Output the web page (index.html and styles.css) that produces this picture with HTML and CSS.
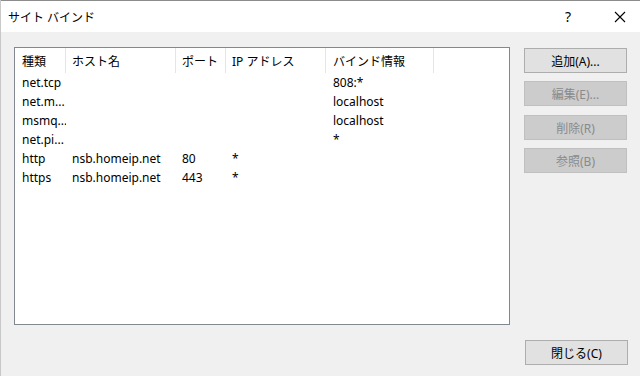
FILE: index.html
```html
<!DOCTYPE html>
<html lang="ja">
<head>
    <meta charset="UTF-8">
    <title>サイト バインド</title>
    <link rel="stylesheet" href="styles.css">
</head>
<body>
    <div class="window">
        <!-- Title bar -->
        <div class="titlebar">
            <span class="title">サイト バインド</span>
            <span class="help">?</span>
            <span class="close">
                <svg width="12" height="12" viewBox="0 0 12 12">
                    <path d="M1 1 L11 11 M11 1 L1 11" stroke="#000" stroke-width="1.1" fill="none"/>
                </svg>
            </span>
        </div>

        <!-- Main area -->
        <div class="content">
            <div class="listview">
                <table>
                    <thead>
                        <tr>
                            <th class="c1">種類</th>
                            <th class="c2">ホスト名</th>
                            <th class="c3">ポート</th>
                            <th class="c4">IP アドレス</th>
                            <th class="c5">バインド情報</th>
                        </tr>
                    </thead>
                    <tbody>
                        <tr><td class="c1">net.tcp</td><td></td><td></td><td></td><td>808:*</td></tr>
                        <tr><td class="c1">net.m...</td><td></td><td></td><td></td><td>localhost</td></tr>
                        <tr><td class="c1">msmq...</td><td></td><td></td><td></td><td>localhost</td></tr>
                        <tr><td class="c1">net.pi...</td><td></td><td></td><td></td><td>*</td></tr>
                        <tr><td class="c1">http</td><td>nsb.homeip.net</td><td>80</td><td>*</td><td></td></tr>
                        <tr><td class="c1">https</td><td>nsb.homeip.net</td><td>443</td><td>*</td><td></td></tr>
                    </tbody>
                </table>
            </div>

            <div class="actions">
                <button class="btn">追加(A)...</button>
                <button class="btn b2" disabled>編集(E)...</button>
                <button class="btn b3" disabled>削除(R)</button>
                <button class="btn b4" disabled>参照(B)</button>
            </div>
        </div>

        <div class="footer">
            <button class="btn">閉じる(C)</button>
        </div>
    </div>
</body>
</html>
```

FILE: styles.css
```css
* {
    box-sizing: border-box;
}

body {
    margin: 0;
    font-family: "Noto Sans", "Noto Sans CJK JP", sans-serif;
    font-size: 12px;
    color: #000;
    background-color: #f0f0f0;
}

.window {
    width: 640px;
    height: 376px;
    border-left: 1px solid #c8c8c8;
}

.titlebar {
    display: flex;
    align-items: center;
    height: 32px;
    padding-left: 7px;
    background-color: #fff;
    border-top: 1px solid #8c8c8c;
}

.title {
    flex: 1;
    font-size: 12px;
}

.help {
    width: 20px;
    margin-right: 36px;
    font-size: 14px;
    text-align: center;
}

.close {
    display: flex;
    margin-right: 14px;
}

.content {
    display: flex;
    gap: 14px;
    padding: 15px 13px 0 13px;
}

.listview {
    width: 496px;
    height: 278px;
    background: #fff;
    border: 1px solid #828790;
}

table {
    table-layout: fixed;
    width: 419px;
    border-collapse: separate;
    border-spacing: 0;
}

th,
td {
    padding: 0 0 0 6px;
    text-align: left;
    font-weight: normal;
    white-space: nowrap;
    overflow: hidden;
}

th {
    height: 25px;
    border-right: 1px solid #e5e5e5;
}

td {
    height: 19px;
}

th.c1, td.c1 { width: 51px; padding-left: 7px; }
th.c2 { width: 110px; }
th.c3 { width: 50px; }
th.c4 { width: 100px; }
th.c5 { width: 108px; padding-left: 7px; }
td:last-child { padding-left: 7px; }

.actions {
    display: flex;
    flex-direction: column;
    padding-top: 1px;
}

.btn {
    width: 103px;
    height: 25px;
    padding: 0;
    font-family: inherit;
    font-size: 12px;
    color: #000;
    background-color: #e1e1e1;
    border: 1px solid #adadad;
}

.btn:disabled {
    color: #8a8a8a;
    background-color: #cccccc;
    border-color: #bfbfbf;
}

.b2 { margin-top: 8px; }
.b3 { margin-top: 9px; }
.b4 { margin-top: 8px; }

.footer {
    display: flex;
    justify-content: flex-end;
    padding: 15px 12px 0 0;
}
```
